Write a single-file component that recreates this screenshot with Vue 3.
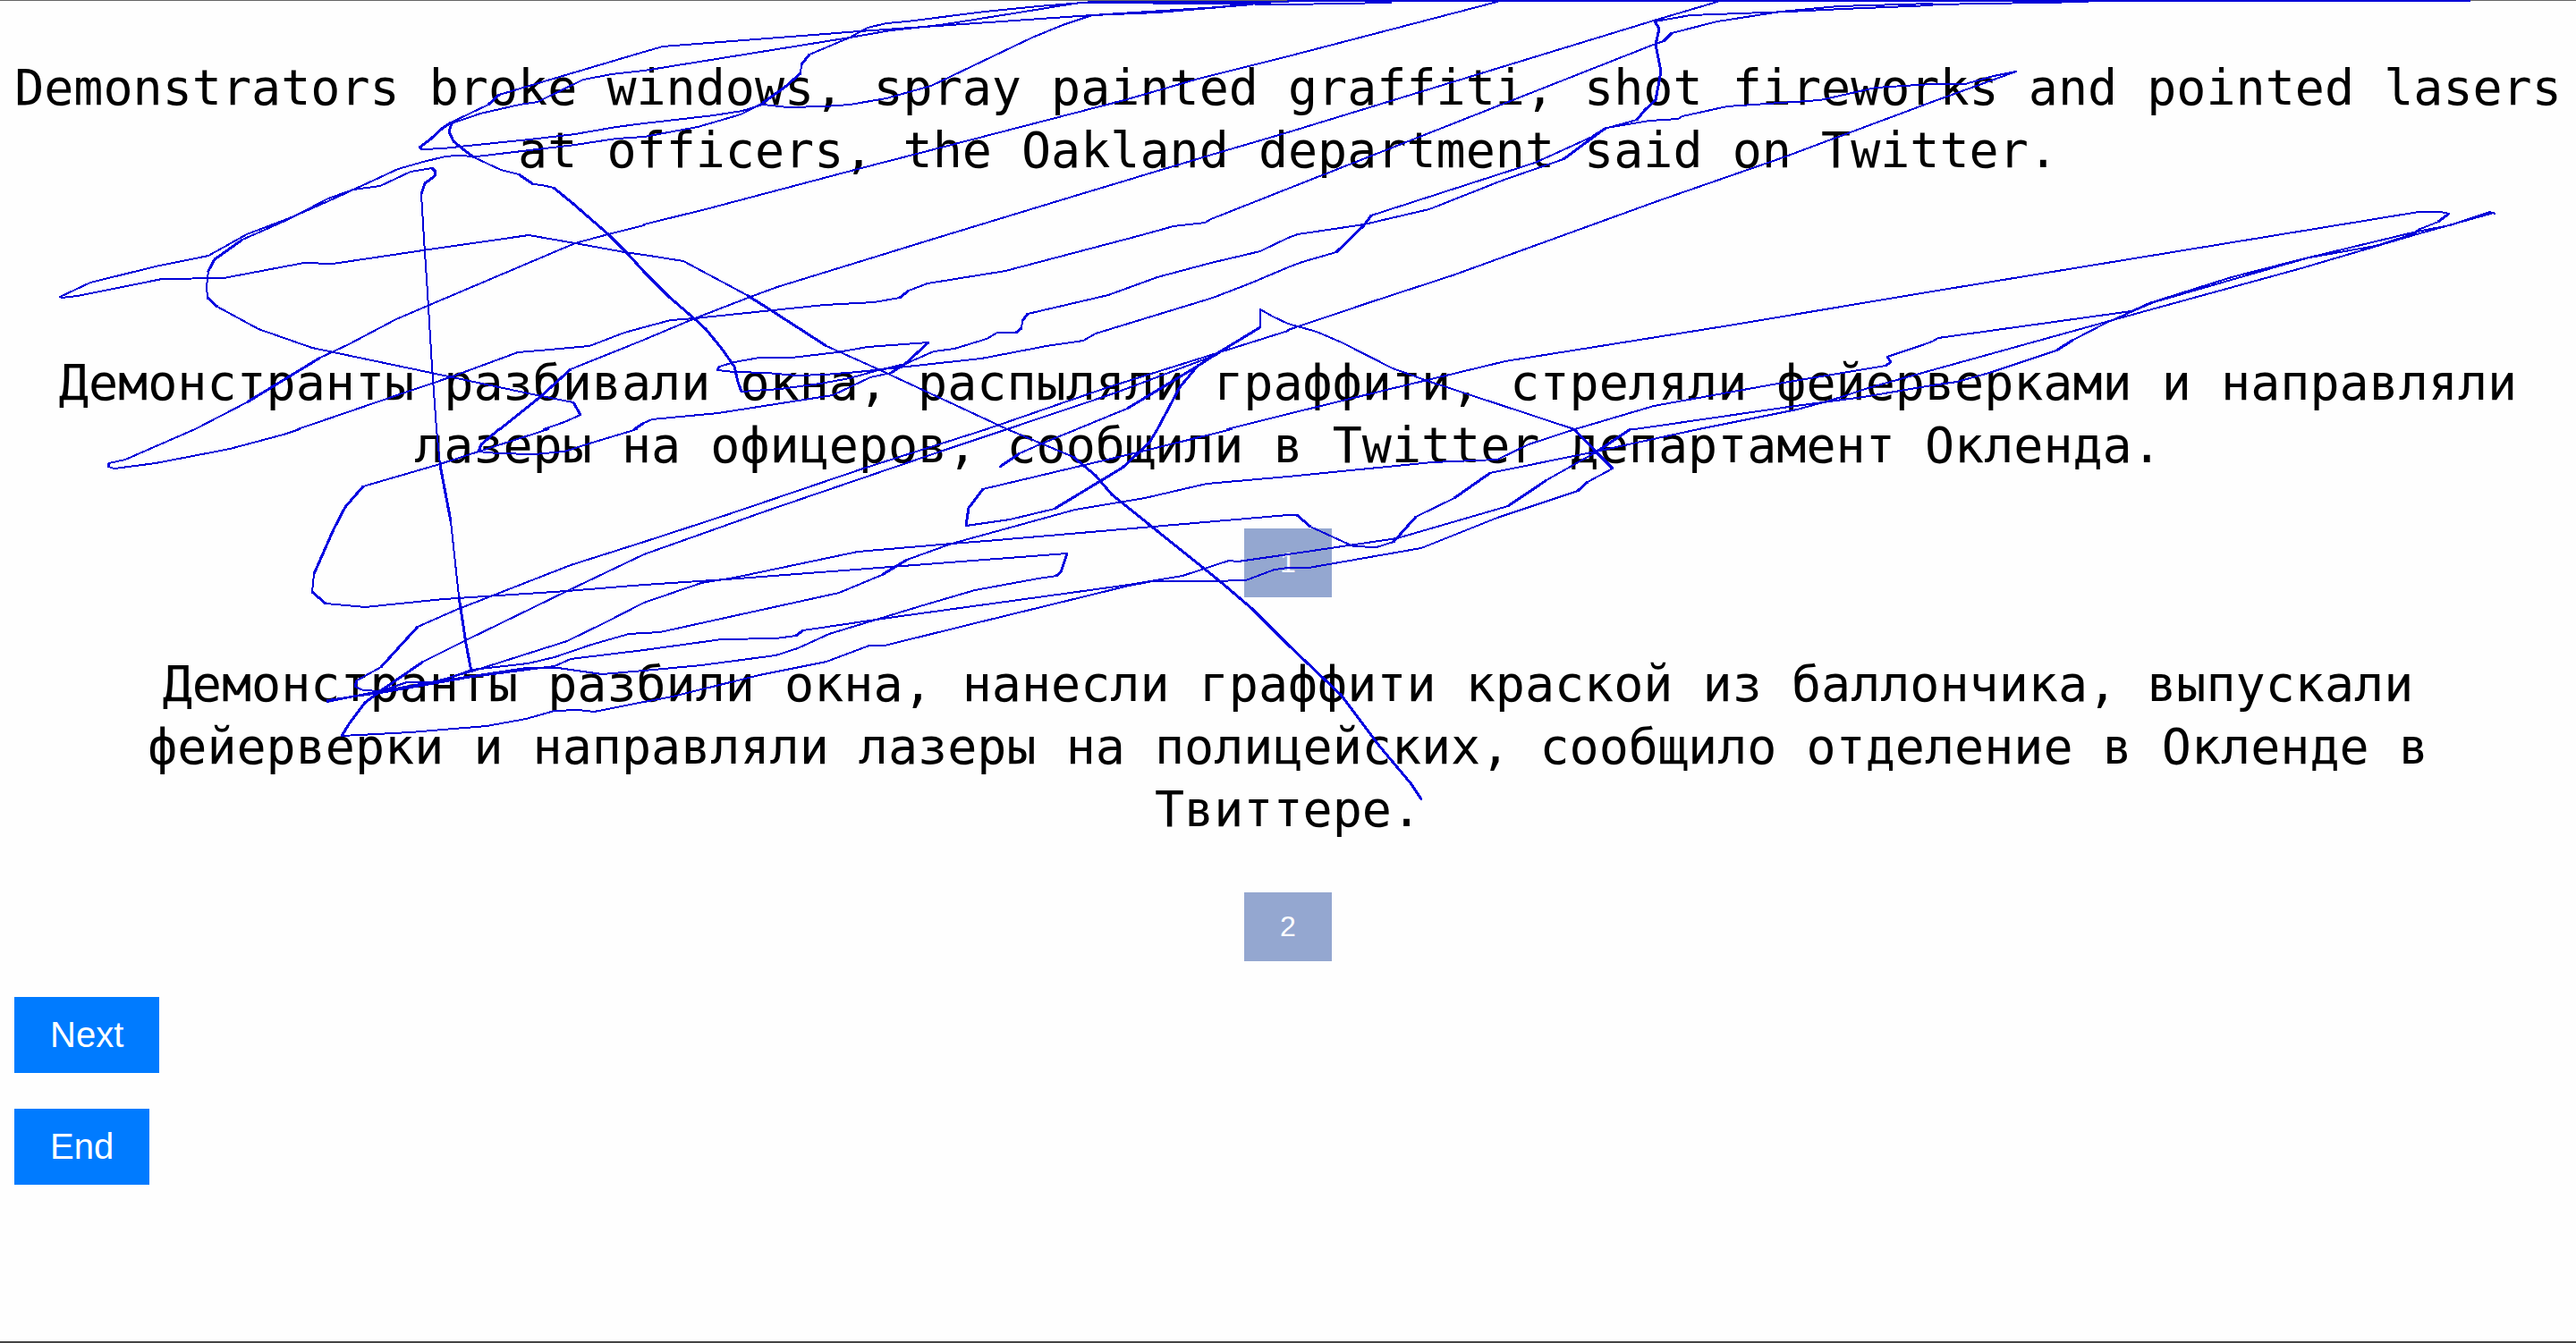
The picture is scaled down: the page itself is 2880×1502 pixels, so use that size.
<script setup>
const source = 'Demonstrators broke windows, spray painted graffiti, shot fireworks and pointed lasers at officers, the Oakland department said on Twitter.'
const candidates = [
  { id: 1, text: 'Демонстранты разбивали окна, распыляли граффити, стреляли фейерверками и направляли лазеры на офицеров, сообщили в Twitter департамент Окленда.' },
  { id: 2, text: 'Демонстранты разбили окна, нанесли граффити краской из баллончика, выпускали фейерверки и направляли лазеры на полицейских, сообщило отделение в Окленде в Твиттере.' }
]

const UNIT_X = 720 / 1568
const UNIT_Y = 1 / 3
const tiles = [
  { x: 0, y: 0, runs: [
    '1568,175 1215,317 1188,350 1098,412 1075,432 1050,465 1022,495 1028,500 1080,499 1140,490 1290,468 1400,450 1500,425 1568,413',
    '1568,237 1490,250 1420,268 1308,343 1265,352 1170,380 1100,415 1093,440 1105,475 1130,505 1155,527 1220,570 1263,586 1298,618 1320,620 1348,630 1395,685 1480,787 1530,855 1568,912',
    '1568,458 1500,466 1400,485 1160,526 1110,522 1085,524 1030,542 970,567 880,625 800,675 710,728 600,787 508,858 380,893 220,948 145,997 150,1000 190,993 395,936 545,932 740,881 810,886 1030,841 1288,790 1400,817 1520,845 1568,855',
    '1062,1440 1052,1230 1040,980 1032,800 1025,650 1035,615 1058,590 1060,575 1052,565 1000,576 925,624 860,637 800,665 700,738 590,803 522,870 508,910 502,960 505,998 530,1028 630,1105 760,1166 1060,1255 1318,1328 1395,1350 1413,1393 1375,1415 1325,1440',
    '475,1440 600,1350 780,1200 850,1155 965,1070 1040,1025 1400,815 1480,785 1568,755',
    '725,1440 960,1328 1095,1265 1262,1183 1340,1174 1435,1160 1520,1117 1568,1099',
    '1218,1440 1318,1328 1390,1238 1568,1140',
    '1545,1440 1568,1420'
  ] },
  { x: 720, y: 0, runs: [
    '0,175 45,157 525,106 1090,52 1400,25 1490,10 1568,5',
    '0,237 500,127 600,102 720,85 900,45 1060,10 1100,5 1568,5',
    '0,413 170,388 240,373 290,350 350,360 440,358 500,352 590,330 700,287 800,222 945,125 1020,85 1090,52 1250,42 1480,15',
    '0,458 130,425 235,383 290,345 345,290 382,245 383,215 402,183 500,127 545,92 590,77 640,72 830,38 960,22 1070,8 1400,12 1568,15',
    '0,753 150,703 530,563 800,467 1170,335 1350,265 1568,188',
    '0,1140 125,1068 260,997 325,962 700,805 1050,658 1390,515 1568,443',
    '0,855 95,877 250,990 310,1042 445,1162 570,1240 885,1440',
    '0,1099 65,1075 125,1069 440,1024 560,1015 622,1000 645,975 690,952 880,910 1210,790 1290,758 1365,748 1380,735 1568,633',
    '0,912 60,995 125,1070 150,1105 190,1170 220,1230 228,1280 238,1315 330,1305 430,1288 500,1268 570,1243 635,1222 705,1180 755,1170 835,1138 860,1115 905,1116 918,1100 922,1078 935,1053 1130,990 1250,930 1380,882 1500,843 1568,798',
    '0,1420 20,1408 180,1385 460,1325 550,1265 600,1250 635,1222 692,1150 545,1164 470,1182 360,1199 280,1201 220,1215 182,1230 178,1243 220,1248 300,1252 370,1259 440,1258 520,1248 640,1230 820,1202 980,1160 1070,1142 1100,1120 1385,1000 1480,948 1568,898',
    '835,1440 1130,1300 1380,1190 1568,1110',
    '885,1440 1150,1318 1380,1198',
    '1055,1440 1175,1370 1345,1230 1390,1190 1500,1098 1500,1038 1530,1063 1568,1085',
    '1250,1440 1305,1300 1350,1225 1400,1185',
    '1420,1440 1568,1390'
  ] },
  { x: 1440, y: 0, runs: [
    '0,3 1568,3',
    '0,15 250,8',
    '0,188 510,5',
    '0,443 890,70 1045,5',
    '0,633 895,148 915,138 935,112 1045,72 1200,40 1340,20 1568,12',
    '0,798 25,785 185,753 345,703 520,607 670,535 770,432 850,403 870,370 895,335 908,240 895,150 903,95 893,72 980,50 1220,38 1350,30 1568,17',
    '0,898 35,880 118,845 185,755 203,722 600,545 740,460 775,430 880,405 950,398 960,391 1070,357 1295,337 1430,295 1568,283',
    '0,1108 200,1015 400,925 900,675 1200,530 1568,343',
    '0,1085 70,1112 130,1148 255,1237 340,1277 697,1440',
    '0,1390 230,1312 530,1212 1060,1095 1568,978',
    '700,1440 890,1363 1180,1290 1455,1227 1468,1215 1460,1198 1550,1155 1568,1145',
    '845,1440 1220,1365 1400,1333 1568,1293',
    '1000,1440 1240,1373 1320,1345 1420,1300 1568,1243'
  ] },
  { x: 2160, y: 0, runs: [
    '0,3 1308,3',
    '0,14 135,12 380,6',
    '0,283 80,282 150,255 205,240 0,343',
    '0,978 1185,710 1240,711 1258,718 1232,745 1190,767 1170,785 1080,825 920,865 850,890 540,1015 480,1050 430,1080 345,1140 303,1175 140,1252 60,1280 0,1293',
    '0,1145 15,1135 485,1045 530,1018 730,930 900,870 1180,778 1260,755 1360,710 1370,716',
    '0,1243 480,1060 900,900 1180,787 1368,715'
  ] },
  { x: 0, y: 480, runs: [
    '475,0 305,103 265,115 263,125 278,132 380,115 560,65 690,18 730,0',
    '1062,0 1072,120 1098,310 1118,560 1135,720 1147,812',
    '1215,0 1172,52 1165,75 1210,82 1300,83 1375,75 1435,48 1550,0',
    '1335,0 1165,75 1072,118 885,192 840,260 812,335 765,485 760,547 792,586 888,598 1080,570 1380,542 1568,523',
    '1568,377 1390,457 1200,558 1110,605 1017,662 970,735 928,797 868,843 865,865 885,876 925,878 990,868',
    '1568,420 1380,542 1135,708 1030,780 925,878 888,918 850,990 832,1028 1000,1018 1185,997 1280,973 1350,946 1410,941 1445,947 1568,915',
    '1568,583 1470,650 1380,712 1147,812 1060,845 925,878 797,912',
    '1568,683 1530,688 1440,723 1350,765 1285,787 1150,808 1060,850 990,850 925,880 797,915',
    '1568,740 1390,770 1350,795 1150,832 925,885 797,910',
    '1568,810 1465,823 1360,800 1280,800 1050,850 797,912'
  ] },
  { x: 720, y: 480, runs: [
    '0,377 200,287 540,130 835,0',
    '0,420 300,273 740,65 885,0',
    '885,0 1045,92 1100,155 1140,220 1240,330 1405,512 1480,603 1568,722',
    '1055,0 970,47 915,82 867,127',
    '1250,0 1230,45 1165,130 1000,268 890,303 785,325 790,265 825,202 1210,75 1430,0',
    '0,523 200,503 630,458 1030,418 1015,480 1003,493 960,500 805,540 680,592 450,688 375,735 320,758 140,793 0,810',
    '0,583 140,515 220,497 520,412 750,384 860,372 1240,328 1568,288',
    '0,683 40,682 475,550 580,490 640,437 750,385 900,327 1050,270 1220,230 1370,183 1568,158',
    '0,740 190,706 320,702 370,693 388,675 580,637 1180,522 1310,493 1425,441 1445,443 1568,420',
    '0,915 70,898 280,825 445,781 548,725 585,727 780,660 1180,525 1240,510 1380,511 1465,506 1535,470 1568,466'
  ] },
  { x: 1440, y: 480, runs: [
    '0,158 350,112 510,103 585,50 700,0',
    '0,288 22,288 55,328 160,393 215,397 258,378 312,295 405,230 493,148 750,75 1000,0',
    '0,420 265,367 535,257 630,170 745,80 835,0 845,0',
    '0,466 50,466 325,400 510,297 705,207 730,178 790,133 750,75 697,0',
    '0,722 130,895 220,1060 300,1190 325,1242'
  ] }
]

const weight = (dx, dy) => {
  const slope = Math.abs(dy) / (Math.abs(dx) || 1)
  return slope > 0.6 && slope < 8 ? 'heavy' : 'light'
}

const trace = tiles.flatMap(tile =>
  tile.runs.flatMap(run => {
    const points = run.split(' ').map(point => {
      const [x, y] = point.split(',').map(Number)
      return [Math.round(tile.x + x * UNIT_X), Math.round(tile.y + y * UNIT_Y)]
    })
    return points.slice(1).map(([x2, y2], i) => {
      const [x1, y1] = points[i]
      return { x1, y1, x2, y2, weight: weight(x2 - x1, y2 - y1) }
    })
  })
)
</script>

<template>
  <main class="page">
    <p class="sentence source">{{ source }}</p>

    <section v-for="item in candidates" :key="item.id" class="candidate">
      <p class="sentence">{{ item.text }}</p>
      <button type="button" class="choice">{{ item.id }}</button>
    </section>

    <nav class="actions">
      <button type="button" class="action">Next</button>
      <button type="button" class="action">End</button>
    </nav>

    <svg class="trace" viewBox="0 0 2880 1502" preserveAspectRatio="none" aria-hidden="true">
      <line
        v-for="(s, i) in trace"
        :key="i"
        :class="s.weight"
        :x1="s.x1"
        :y1="s.y1"
        :x2="s.x2"
        :y2="s.y2"
      />
    </svg>
  </main>
</template>

<style>
body {
  margin: 0;
  background: #fff;
}
</style>

<style scoped>
.page {
  position: relative;
  box-sizing: border-box;
  min-height: 100vh;
  padding: 62px 16px 40px;
  border-top: 1px solid #666;
  border-bottom: 2px solid #444;
  background: #fefefe;
}

.sentence {
  margin: 0;
  color: #000;
  font-family: "DejaVu Sans Mono", monospace;
  font-size: 55px;
  line-height: 70px;
  text-align: center;
}

.source {
  margin-bottom: 190px;
}

.candidate {
  display: flex;
  flex-direction: column;
  align-items: center;
  gap: 58px;
}

.candidate + .candidate {
  margin-top: 62px;
}

button {
  border: 0;
  border-radius: 0;
  color: #fff;
  font-family: Arial, "Liberation Sans", sans-serif;
}

.choice {
  padding: 20px 40px;
  background: #94a7d0;
  font-size: 32px;
  line-height: 37px;
}

.actions {
  display: flex;
  flex-direction: column;
  align-items: flex-start;
  gap: 40px;
  margin-top: 40px;
}

.action {
  padding: 20px 40px;
  background: #007bff;
  font-size: 40px;
  line-height: 45px;
}

.trace {
  position: absolute;
  top: -1px;
  left: 0;
  width: 100%;
  height: calc(100% + 3px);
  pointer-events: none;
}

.trace line {
  stroke-linecap: round;
  shape-rendering: crispEdges;
}

.light {
  stroke: #0000d8;
  stroke-width: 2;
}

.heavy {
  stroke: #0000e0;
  stroke-width: 3;
}
</style>
